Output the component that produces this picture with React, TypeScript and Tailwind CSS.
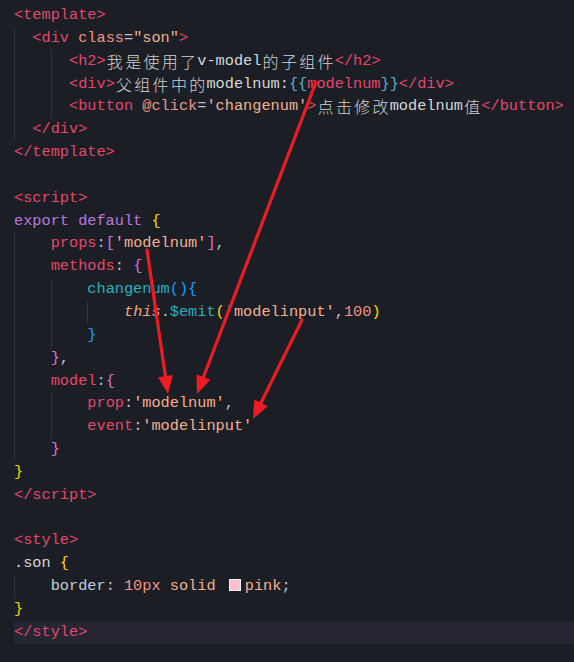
import React from "react";

const TAG = "text-[#e2486a]";
const ATTR = "text-[#f09483]";
const STR = "text-[#f5b08e]";
const P = "text-[#bfc1c5]";
const TXT = "text-[#d5d8da]";
const KW = "text-[#b877db]";
const KEY = "text-[#e2486a]";
const FN = "text-[#25b0bc]";
const NUM = "text-[#f09483]";
const THIS = "text-[#f3a683] italic";
const B1 = "text-[#ffd700]";
const B2 = "text-[#da70d6]";
const B3 = "text-[#179fff]";
const INTERP = "text-[#5fb0c9]";
const CSSSEL = "text-[#d5d8da]";
const CSSPROP = "text-[#c3cdd8]";

type Tok =
  | { k: "t"; s: string; c: string }
  | { k: "cjk"; s: string }
  | { k: "sw" };

const t = (s: string, c: string): Tok => ({ k: "t", s, c });
const cj = (s: string): Tok => ({ k: "cjk", s });
const SW: Tok = { k: "sw" };

type Line = { ind: number[]; toks: Tok[]; hl?: boolean };

const lines: Line[] = [
  { ind: [], toks: [t("<template>", TAG)] },
  { ind: [2], toks: [t("<div", TAG), t(" ", P), t("class", ATTR), t("=", P), t('"son"', STR), t(">", TAG)] },
  { ind: [4, 2], toks: [t("<h2>", TAG), cj("我是使用了"), t("v-model", TXT), cj("的子组件"), t("</h2>", TAG)] },
  { ind: [4, 2], toks: [t("<div>", TAG), cj("父组件中的"), t("modelnum:", TXT), t("{{", INTERP), t("modelnum", KEY), t("}}", INTERP), t("</div>", TAG)] },
  { ind: [4, 2], toks: [t("<button", TAG), t(" ", P), t("@click", ATTR), t("=", P), t("'changenum'", STR), t(">", TAG), cj("点击修改"), t("modelnum", TXT), cj("值"), t("</button>", TAG)] },
  { ind: [2], toks: [t("</div>", TAG)] },
  { ind: [], toks: [t("</template>", TAG)] },
  { ind: [], toks: [] },
  { ind: [], toks: [t("<script>", TAG)] },
  { ind: [], toks: [t("export", KW), t(" ", P), t("default", KW), t(" ", P), t("{", B1)] },
  { ind: [4], toks: [t("props", KEY), t(":", P), t("[", B2), t("'modelnum'", STR), t("]", B2), t(",", P)] },
  { ind: [4], toks: [t("methods", KEY), t(": ", P), t("{", B2)] },
  { ind: [4, 4], toks: [t("changenum", FN), t("()", B3), t("{", B3)] },
  { ind: [4, 4, 4], toks: [t("this", THIS), t(".", P), t("$emit", FN), t("(", B1), t("'modelinput'", STR), t(",", P), t("100", NUM), t(")", B1)] },
  { ind: [4, 4], toks: [t("}", B3)] },
  { ind: [4], toks: [t("}", B2), t(",", P)] },
  { ind: [4], toks: [t("model", KEY), t(":", P), t("{", B2)] },
  { ind: [4, 4], toks: [t("prop", KEY), t(":", P), t("'modelnum'", STR), t(",", P)] },
  { ind: [4, 4], toks: [t("event", KEY), t(":", P), t("'modelinput'", STR)] },
  { ind: [4], toks: [t("}", B2)] },
  { ind: [], toks: [t("}", B1)] },
  { ind: [], toks: [t("</script>", TAG)] },
  { ind: [], toks: [] },
  { ind: [], toks: [t("<style>", TAG)] },
  { ind: [], toks: [t(".son", CSSSEL), t(" ", P), t("{", B1)] },
  { ind: [4], toks: [t("border", CSSPROP), t(": ", P), t("10px", NUM), t(" ", P), t("solid", STR), t(" ", P), SW, t("pink", STR), t(";", P)] },
  { ind: [], toks: [t("}", B1)] },
  { ind: [], toks: [t("</style>", TAG)], hl: true },
];

function Indent({ n }: { n: number }) {
  const w = n === 4 ? "w-[36.67px]" : "w-[18.34px]";
  return <span className={`inline-block h-[22.85px] align-top border-l border-[#30323d] ${w}`} />;
}

function Cjk({ s }: { s: string }) {
  return (
    <>
      {Array.from(s).map((ch, i) => (
        <span
          key={i}
          className="inline-block w-[18.34px] text-center text-[16px] text-[#cfd1d3] font-['Noto_Sans_CJK_SC',sans-serif] font-light align-top leading-[22.85px]"
        >
          {ch}
        </span>
      ))}
    </>
  );
}

function Arrow({ x1, y1, x2, y2 }: { x1: number; y1: number; x2: number; y2: number }) {
  const dx = x2 - x1;
  const dy = y2 - y1;
  const len = Math.hypot(dx, dy);
  const ux = dx / len;
  const uy = dy / len;
  const hl = 18;
  const hw = 7.5;
  const bx = x2 - ux * hl;
  const by = y2 - uy * hl;
  const px = -uy;
  const py = ux;
  const pts = `${x2},${y2} ${bx + px * hw},${by + py * hw} ${bx - px * hw},${by - py * hw}`;
  return (
    <g>
      <line x1={x1} y1={y1} x2={bx + ux * 2} y2={by + uy * 2} stroke="#ec1c24" strokeWidth={3.2} strokeLinecap="round" />
      <polygon points={pts} fill="#ec1c24" />
    </g>
  );
}

export default function App() {
  return (
    <div className="relative w-[574px] h-[662px] overflow-hidden bg-[#1c1e26] pt-[4px] font-['Liberation_Mono',monospace] text-[15.28px]">
      {lines.map((ln, i) => (
        <div
          key={i}
          className={`ml-[14px] h-[22.85px] leading-[22.85px] whitespace-pre ${ln.hl ? "bg-[#252631]" : ""}`}
        >
          {ln.ind.map((n, j) => (
            <Indent key={j} n={n} />
          ))}
          {ln.toks.map((tk, j) => {
            if (tk.k === "cjk") return <Cjk key={j} s={tk.s} />;
            if (tk.k === "sw")
              return (
                <span
                  key={j}
                  className="inline-block w-[12px] h-[12px] mx-[4px] border-[1.5px] border-[#f2f2f2] bg-[#ffc0cb] align-[-1px]"
                />
              );
            return (
              <span key={j} className={tk.c}>
                {tk.s}
              </span>
            );
          })}
        </div>
      ))}
      <svg className="absolute left-0 top-0" width={574} height={662} viewBox="0 0 574 662">
        <Arrow x1={147} y1={250} x2={168} y2={394} />
        <Arrow x1={316} y1={82} x2={197} y2={394} />
        <Arrow x1={302} y1={320} x2={253} y2={419} />
      </svg>
    </div>
  );
}
